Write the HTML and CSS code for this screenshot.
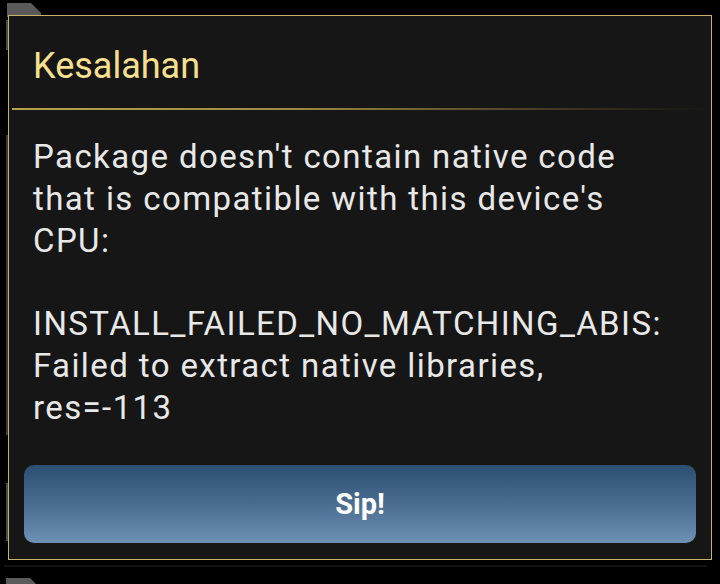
FILE: index.html
```html
<!DOCTYPE html>
<html>
<head>
<meta charset="utf-8">
<link rel="stylesheet" href="styles.css">
</head>
<body>
<div class="stage">
  <div class="bg-tab bg-tab-top"></div>
  <div class="bg-tab bg-tab-bottom"></div>
  <div class="bg-strip bg-strip-a"></div>
  <div class="bg-strip bg-strip-b"></div>
  <div class="bg-strip bg-strip-c"></div>
  <div class="shadow-line"></div>
  <div class="dialog">
    <h1 class="title">Kesalahan</h1>
    <div class="divider"></div>
    <p class="message">Package doesn't contain native code<br>that is compatible with this device's<br>CPU:<br><br>INSTALL_FAILED_NO_MATCHING_ABIS:<br>Failed to extract native libraries,<br>res=-113</p>
    <button class="ok">Sip!</button>
  </div>
</div>
</body>
</html>
```
FILE: styles.css
```css
html, body {
  margin: 0;
  padding: 0;
  background: #000;
}
.stage {
  position: relative;
  width: 720px;
  height: 584px;
  overflow: hidden;
  background: #000;
  font-family: Roboto, "Noto Sans", sans-serif;
}
.bg-tab {
  position: absolute;
  background: #5a5a5a;
}
.bg-tab-top {
  left: 7px;
  top: 3px;
  width: 34px;
  height: 14px;
  clip-path: polygon(0 0, 24px 0, 34px 10px, 34px 100%, 0 100%);
}
.bg-tab-bottom {
  left: 6px;
  top: 578px;
  width: 32px;
  height: 10px;
  clip-path: polygon(0 0, 24px 0, 32px 8px, 32px 100%, 0 100%);
}
.bg-strip {
  position: absolute;
  left: 6px;
  width: 2px;
  background: #4a4a4a;
}
.bg-strip-a { top: 20px; height: 30px; }
.bg-strip-b { top: 135px; height: 300px; background: #3a3a3a; }
.bg-strip-c { top: 483px; height: 58px; }
.shadow-line {
  position: absolute;
  left: 4px;
  top: 565px;
  width: 703px;
  height: 2px;
  background: #121212;
}
.dialog {
  position: relative;
  box-sizing: border-box;
  margin: 15px 0 0 8px;
  width: 704px;
  height: 545px;
  border: 1px solid #c9b263;
  background: #161616;
  display: flex;
  flex-direction: column;
}
.title {
  margin: 26px 0 0 0;
  padding: 0 24px;
  font-size: 36px;
  line-height: 48px;
  font-weight: 400;
  color: #f6e08e;
}
.divider {
  margin: 18px 0 0 3px;
  height: 2px;
  background: linear-gradient(to right, #b8a04c 0%, #a08a42 40%, #3a3422 80%, rgba(40,36,24,0) 100%);
}
.message {
  margin: 26px 0 0 0;
  padding: 0 24px;
  font-size: 33px;
  letter-spacing: 1.4px;
  line-height: 41.75px;
  color: #e8e8e8;
  white-space: nowrap;
}
.ok {
  margin: auto 15px 16px 15px;
  height: 78px;
  border: none;
  border-radius: 10px;
  background: linear-gradient(to bottom, #2c4e72 0%, #4a6c90 50%, #6d90b3 100%);
  color: #fff;
  font-family: Roboto, "Noto Sans", sans-serif;
  font-size: 29px;
  font-weight: 700;
  display: flex;
  align-items: center;
  justify-content: center;
  padding: 0;
}
```
